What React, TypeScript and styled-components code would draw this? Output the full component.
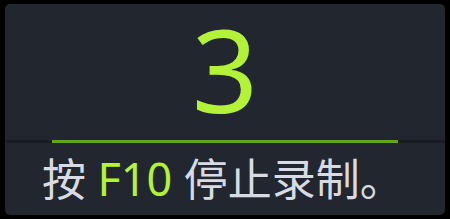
import styled, { createGlobalStyle } from "styled-components";

const GlobalStyle = createGlobalStyle`
  html, body {
    margin: 0;
    padding: 0;
    background: #000;
  }
  body {
    font-family: "Noto Sans", "Noto Sans CJK SC", sans-serif;
  }
`;

const Page = styled.div`
  width: 450px;
  height: 219px;
  padding: 4px 5px;
  box-sizing: border-box;
`;

const Card = styled.div`
  height: 211px;
  background: #22272f;
  border-radius: 5px;
  display: flex;
  flex-direction: column;
`;

const Countdown = styled.div`
  height: 136px;
  flex: none;
  text-align: center;
  color: #b4f23a;
  font-family: "Noto Sans", sans-serif;
  font-size: 116px;
  line-height: 128px;
`;

const Track = styled.div`
  height: 3px;
  flex: none;
  background: #1a1d22;
  display: flex;
  justify-content: center;
`;

const Progress = styled.div`
  height: 3px;
  background: #5da816;
`;

const Hint = styled.div`
  flex: 1;
  padding-left: 37px;
  color: #d9dbe4;
  font-family: "Noto Sans", "Noto Sans CJK SC", sans-serif;
  font-size: 44px;
  line-height: 72px;
  white-space: pre;
`;

const Key = styled.span`
  color: #b4f23a;
  font-size: 45px;
`;

export default function App() {
  return (
    <>
      <GlobalStyle />
      <Page>
        <Card>
          <Countdown>3</Countdown>
          <Track>
            <Progress style={{ width: `${(346 / 440) * 100}%` }} />
          </Track>
          <Hint>
            按 <Key>F10</Key> 停止录制。
          </Hint>
        </Card>
      </Page>
    </>
  );
}
